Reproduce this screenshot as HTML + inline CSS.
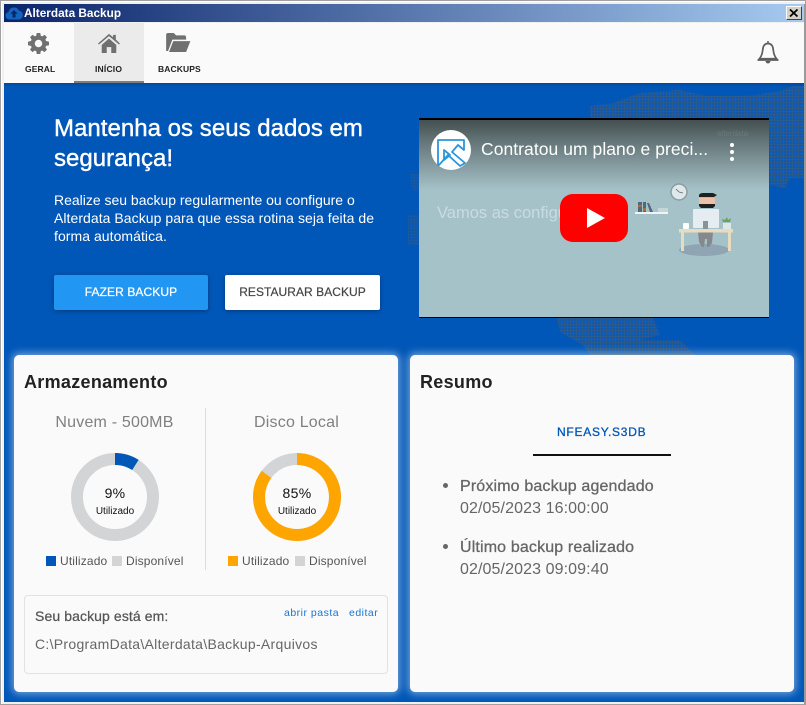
<!DOCTYPE html>
<html><head><meta charset="utf-8"><style>
*{box-sizing:border-box}
html,body{margin:0;padding:0;width:806px;height:705px;overflow:hidden;background:#f0f0f0;font-family:"Liberation Sans",sans-serif}
.a{position:absolute;white-space:nowrap;line-height:1}
</style></head><body>
<div class="a" style="left:0;top:0;width:806px;height:705px;border:1px solid #a0a0a0;box-shadow:inset 1px 1px 0 #fff"></div>
<div class="a" style="left:804px;top:4px;width:2px;height:700px;background:#9a9a9a"></div>
<div class="a" style="left:4px;top:4px;width:800px;height:18px;background:linear-gradient(90deg,#0a246a,#a6caf0)"></div>
<svg class="a" style="left:5px;top:5px" width="18" height="16" viewBox="0 0 18 16"><path d="M4 14.500a3.800 3.800 0 0 1-.5-7.500A5.600 5.600 0 0 1 14 5.600 4.500 4.500 0 0 1 14 14.500z" fill="#1463bd"/><path d="M9 5l3.600 3.800H10.500V12.500H7.500V8.800H5.400z" fill="#0a246a"/></svg>
<div class="a" style="left:24px;top:8px;font-size:11.800px;font-weight:bold;color:#fff">Alterdata Backup</div>
<div class="a" style="left:786px;top:6px;width:16px;height:14px;background:#d4d0c8;border:1px solid;border-color:#fff #404040 #404040 #fff;"></div>
<svg class="a" style="left:786px;top:6px" width="16" height="14"><path d="M4 3.500l7.500 7M11.500 3.500l-7.500 7" stroke="#000" stroke-width="1.800"/></svg>

<div class="a" style="left:4px;top:23px;width:800px;height:60px;background:#fafafa"></div>
<div class="a" style="left:74px;top:23px;width:70px;height:60px;background:#ebebeb;border-bottom:2px solid #7d7d7d"></div>
<svg class="a" style="left:28px;top:33px" width="21" height="21" viewBox="0 0 24 24"><path fill="#707070" fill-rule="evenodd" d="M10 0h4l.6 3.100 1.700.7 2.600-1.800 2.800 2.800-1.800 2.600.7 1.700L24 10v4l-3.400.7-.7 1.700 1.800 2.600-2.800 2.800-2.600-1.800-1.700.7L14 24h-4l-.6-3.300-1.700-.7-2.600 1.800-2.800-2.800 1.800-2.600-.7-1.700L0 14v-4l3.400-.9.700-1.700-1.800-2.600 2.800-2.800 2.600 1.800 1.700-.7zM12 7.700a4.300 4.300 0 1 0 0 8.600A4.300 4.300 0 0 0 12 7.700z"/></svg>
<svg class="a" style="left:98px;top:33px" width="22" height="20" viewBox="0 0 24 22"><path fill="#707070" d="M0 11.500 12 1l4.500 3.700V2h3v5.200L24 11.500l-1 1.200L12 3.500 1 12.700z"/><path fill="#707070" d="M4 13 12 6l8 7v9h-5.500v-6.500h-5V22H4z"/></svg>
<svg class="a" style="left:166px;top:33px" width="25" height="19" viewBox="0 0 26 20"><path fill="#707070" d="M0 2a2 2 0 0 1 2-2h6l2.500 2.500H19a2 2 0 0 1 2 2V7H6.500L2 19H0z"/><path fill="#707070" d="M7.500 8.500H25.500L21 20H3z"/></svg>
<div class="a" style="left:25px;top:65px;font-size:8.500px;font-weight:bold;color:#222;letter-spacing:.1px">GERAL</div>
<div class="a" style="left:95px;top:65px;font-size:8.500px;font-weight:bold;color:#222;letter-spacing:.2px">INÍCIO</div>
<div class="a" style="left:158px;top:65px;font-size:8.500px;font-weight:bold;color:#222;letter-spacing:.1px">BACKUPS</div>
<svg class="a" style="left:754px;top:40px" width="28" height="28" viewBox="0 0 28 28"><path d="M14 3.500c-4 0-5 3-5.300 6.500-.3 3.500-1 6-3.200 8.700h17c-2.200-2.700-2.900-5.200-3.200-8.700C19 6.500 18 3.500 14 3.500z" fill="#fafafa" stroke="#5e5e5e" stroke-width="1.700"/><path d="M3.500 20h21" stroke="#5e5e5e" stroke-width="1.700"/><path d="M11.500 21h5a2.500 2.500 0 0 1-5 0z" fill="#5e5e5e"/><path d="M14 1v3" stroke="#5e5e5e" stroke-width="1.500"/></svg>

<div class="a" style="left:4px;top:83px;width:800px;height:619px;background:#0057b8"></div>
<div class="a" style="left:4px;top:83px;width:800px;height:4px;background:linear-gradient(#0048a0,#0057b8)"></div>
<svg class="a" style="left:4px;top:83px" width="800" height="290" viewBox="4 83 800 290">
<defs><pattern id="g" width="3" height="3" patternUnits="userSpaceOnUse"><rect width="3" height="3" fill="#0b59b2"/><rect width="1" height="3" fill="#2c5a8c"/><rect width="3" height="1" fill="#2c5a8c"/></pattern></defs>
<path fill="url(#g)" d="M590 118V106L613 103 640 93 680 90 707 96 747 96 780 91 793 86H804V178H790L785 188 770 185 769 118zM557 318H653L660 335 640 340H680L695 355H590L583 345 560 332z"/>
<path fill="url(#g)" opacity=".6" d="M410 174H419V190H412zM408 215H419V245H408z"/>
</svg>

<div class="a" style="left:54px;top:117px;font-size:24px;color:#fff;-webkit-text-stroke:.4px #fff;letter-spacing:.03px">Mantenha os seus dados em</div>
<div class="a" style="left:54px;top:147px;font-size:24px;color:#fff;-webkit-text-stroke:.4px #fff;letter-spacing:.03px">segurança!</div>
<div class="a" style="left:54px;top:193px;font-size:14px;color:#fff;letter-spacing:-.01px">Realize seu backup regularmente ou configure o</div>
<div class="a" style="left:54px;top:211px;font-size:14px;color:#fff;letter-spacing:.05px">Alterdata Backup para que essa rotina seja feita de</div>
<div class="a" style="left:54px;top:229px;font-size:14px;color:#fff;letter-spacing:.05px">forma automática.</div>
<div class="a" style="left:54px;top:275px;width:154px;height:35px;background:#2196f3;border-radius:2px;box-shadow:0 1px 4px rgba(0,0,0,.35);color:#fff;font-size:12px;line-height:35px;text-align:center;letter-spacing:.1px;-webkit-text-stroke:.25px #fff">FAZER BACKUP</div>
<div class="a" style="left:225px;top:275px;width:155px;height:35px;background:#fff;border-radius:2px;box-shadow:0 1px 4px rgba(0,0,0,.35);color:#444;font-size:12px;line-height:35px;text-align:center;letter-spacing:.05px;-webkit-text-stroke:.2px #444">RESTAURAR BACKUP</div>

<div class="a" style="left:419px;top:118px;width:350px;height:200px;background:#a6c2c9;border-top:2px solid #000;border-bottom:1px solid #000;overflow:hidden">
<div class="a" style="left:0;top:0;width:350px;height:70px;background:linear-gradient(#444f50,#5f6f72 25%,#a6c2c9)"></div>
<div class="a" style="left:18px;top:85px;font-size:16.500px;color:#cfe0e3;opacity:.85">Vamos as configu</div>
<div class="a" style="left:12px;top:10px;width:40px;height:40px;border-radius:50%;background:#fff"></div>
<svg class="a" style="left:12px;top:10px" width="40" height="40" viewBox="0 0 40 40"><path d="M7 10H33V20L27 15 21 22 34 33 29 36 17 25 8 35H7zM13 20V30L19 25z" fill="none" stroke="#2a96dc" stroke-width="1.800" stroke-linejoin="round"/></svg>
<div class="a" style="left:62px;top:21px;font-size:17.500px;color:#fff;letter-spacing:.05px">Contratou um plano e preci...</div>
<div class="a" style="left:311px;top:23px;width:4px;height:4px;border-radius:50%;background:#fff;box-shadow:0 7px 0 #fff,0 14px 0 #fff"></div>
<div class="a" style="left:298px;top:10px;font-size:8px;color:#7a8a8d;opacity:.45">alterdata</div>
<svg class="a" style="left:0;top:0" width="350" height="197" viewBox="419 120 350 197">
<circle cx="679" cy="192" r="8" fill="#dfe8ea" stroke="#8b9ca3" stroke-width="1.500"/><path d="M679 192l-3-3M679 192l4 1" stroke="#5a6a70" stroke-width=".8"/>
<rect x="635" y="212" width="33" height="2" fill="#f0f4f5"/>
<path d="M638 202h4v10h-4zM643 202h3v10h-3zM647 203h2l4 9h-3z" fill="#52687c"/><path d="M638 205h4v2h-4zM643 208h3v3h-3z" fill="#b06a3c"/><rect x="658" y="208" width="10" height="4" fill="#c4d6da"/>
<ellipse cx="704" cy="250" rx="25" ry="6" fill="#8fa5b4"/>
<path d="M698 232h15l-1 11-3 4h-2v-8h-2l-1 8h-2l-3-5z" fill="#85898c"/>
<rect x="679" y="229" width="54" height="3.500" fill="#e8dcc0"/><rect x="681" y="232" width="3" height="19" fill="#e8dcc0"/><rect x="728" y="232" width="3" height="19" fill="#e8dcc0"/>
<rect x="693" y="209" width="26" height="19" rx="1" fill="#e6edf2"/><rect x="703" y="221" width="5" height="8" fill="#8a9498"/>
<rect x="699" y="198" width="16" height="8" fill="#eec0a8"/><path d="M699 195q1-2 4-2h10l4 2-3 2H699z" fill="#1e2122"/><path d="M699 204h16v2l-2 2h-12l-2-2z" fill="#1e2122"/>
<rect x="683" y="223" width="6" height="6" rx="1" fill="#fff"/>
<rect x="723" y="223" width="8" height="6" fill="#dce8e6"/><path d="M723 222l-1-3 3 1 2-3 1 3 3-2-1 4z" fill="#6ca35a"/>
</svg>
<div class="a" style="left:141px;top:74px;width:68px;height:48px;background:#f00;border-radius:13px"></div>
<svg class="a" style="left:141px;top:74px" width="68" height="48"><path d="M27 14v20l18-10z" fill="#fff"/></svg>
</div>

<div class="a" style="left:14px;top:355px;width:384px;height:337px;background:#fafafa;border-radius:5px;box-shadow:0 0 8px 2px rgba(255,255,255,.45)"></div>
<div class="a" style="left:410px;top:355px;width:384px;height:337px;background:#fafafa;border-radius:5px;box-shadow:0 0 8px 2px rgba(255,255,255,.45)"></div>

<div class="a" style="left:24px;top:373px;font-size:18px;font-weight:bold;color:#222;letter-spacing:.3px">Armazenamento</div>
<div class="a" style="left:420px;top:373px;font-size:18px;font-weight:bold;color:#222;letter-spacing:.3px">Resumo</div>
<div class="a" style="left:14px;top:415px;width:201px;text-align:center;font-size:16px;color:#808080;letter-spacing:.2px">Nuvem - 500MB</div>
<div class="a" style="left:196px;top:415px;width:201px;text-align:center;font-size:16px;color:#808080;letter-spacing:.2px">Disco Local</div>
<div class="a" style="left:205px;top:408px;width:1px;height:162px;background:#dcdcdc"></div>

<svg class="a" style="left:60px;top:442px" width="110" height="110"><circle cx="55" cy="55" r="38" fill="none" stroke="#d3d4d6" stroke-width="12"/><circle cx="55" cy="55" r="38" fill="none" stroke="#0057b8" stroke-width="12" stroke-dasharray="21.500 217.300" transform="rotate(-90 55 55)"/></svg>
<svg class="a" style="left:242px;top:442px" width="110" height="110"><circle cx="55" cy="55" r="38" fill="none" stroke="#d3d4d6" stroke-width="12"/><circle cx="55" cy="55" r="38" fill="none" stroke="#ffa500" stroke-width="12" stroke-dasharray="203 35.800" transform="rotate(-90 55 55)"/></svg>
<div class="a" style="left:60px;top:486px;width:110px;text-align:center;font-size:14px;color:#111;letter-spacing:.3px">9%</div>
<div class="a" style="left:60px;top:507px;width:110px;text-align:center;font-size:10px;color:#111">Utilizado</div>
<div class="a" style="left:242px;top:486px;width:110px;text-align:center;font-size:14px;color:#111;letter-spacing:.3px">85%</div>
<div class="a" style="left:242px;top:507px;width:110px;text-align:center;font-size:10px;color:#111">Utilizado</div>

<div class="a" style="left:46px;top:556px;width:10px;height:10px;background:#0057b8"></div>
<div class="a" style="left:60px;top:555px;font-size:12px;color:#555;letter-spacing:.15px">Utilizado</div>
<div class="a" style="left:112px;top:556px;width:10px;height:10px;background:#d3d4d6"></div>
<div class="a" style="left:126px;top:555px;font-size:12px;color:#555;letter-spacing:.15px">Disponível</div>
<div class="a" style="left:228px;top:556px;width:10px;height:10px;background:#ffa500"></div>
<div class="a" style="left:242px;top:555px;font-size:12px;color:#555;letter-spacing:.15px">Utilizado</div>
<div class="a" style="left:295px;top:556px;width:10px;height:10px;background:#d3d4d6"></div>
<div class="a" style="left:309px;top:555px;font-size:12px;color:#555;letter-spacing:.15px">Disponível</div>

<div class="a" style="left:24px;top:595px;width:364px;height:79px;border:1px solid #e2e2e2;border-radius:4px"></div>
<div class="a" style="left:35px;top:609px;font-size:14px;color:#555;-webkit-text-stroke:.25px #555;letter-spacing:.1px">Seu backup está em:</div>
<div class="a" style="left:284px;top:608px;font-size:10.500px;color:#1976d2;letter-spacing:.5px">abrir pasta</div>
<div class="a" style="left:349px;top:608px;font-size:10.500px;color:#1976d2;letter-spacing:.5px">editar</div>
<div class="a" style="left:35px;top:637px;font-size:14px;color:#666;letter-spacing:.3px">C:\ProgramData\Alterdata\Backup-Arquivos</div>

<div class="a" style="left:557px;top:426px;font-size:12px;color:#0057b8;-webkit-text-stroke:.3px #0057b8;letter-spacing:.75px">NFEASY.S3DB</div>
<div class="a" style="left:533px;top:454px;width:138px;height:2px;background:#111"></div>
<div class="a" style="left:443px;top:483px;width:5px;height:5px;border-radius:50%;background:#666"></div>
<div class="a" style="left:460px;top:479px;font-size:16px;color:#666;-webkit-text-stroke:.3px #666;letter-spacing:.15px">Próximo backup agendado</div>
<div class="a" style="left:460px;top:501px;font-size:16px;color:#666;letter-spacing:.1px">02/05/2023 16:00:00</div>
<div class="a" style="left:443px;top:544px;width:5px;height:5px;border-radius:50%;background:#666"></div>
<div class="a" style="left:460px;top:540px;font-size:16px;color:#666;-webkit-text-stroke:.3px #666;letter-spacing:.15px">Último backup realizado</div>
<div class="a" style="left:460px;top:562px;font-size:16px;color:#666;letter-spacing:.1px">02/05/2023 09:09:40</div>
</body></html>
